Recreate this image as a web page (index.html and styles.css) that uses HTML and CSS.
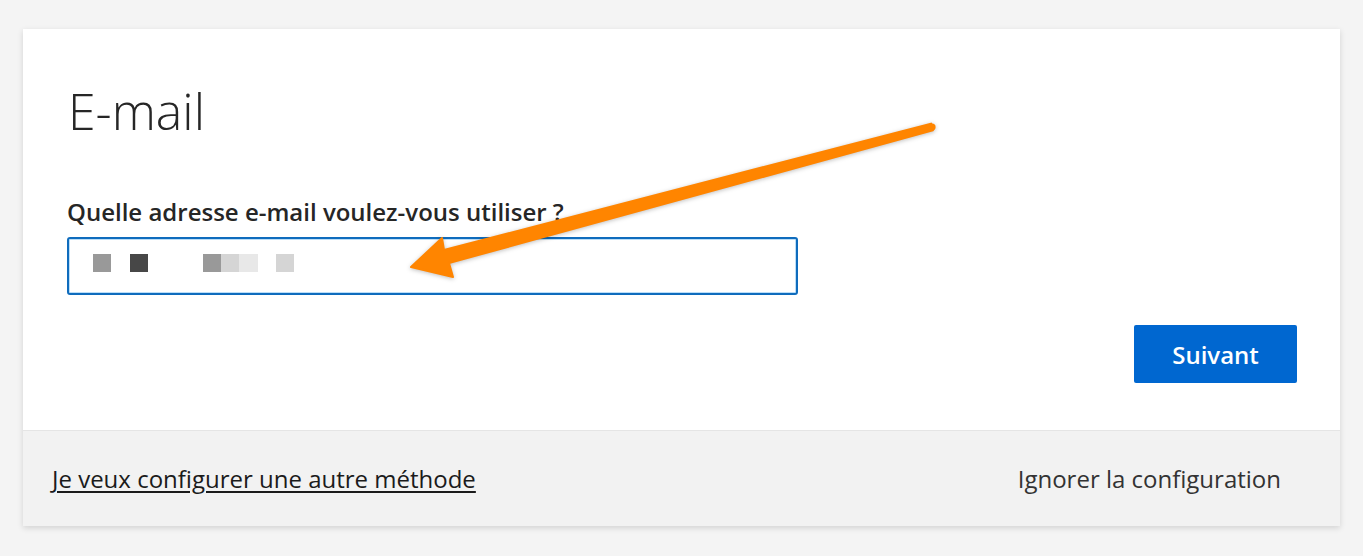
FILE: index.html
```html
<!DOCTYPE html>
<html lang="fr">
<head>
    <meta charset="UTF-8">
    <meta name="viewport" content="width=device-width, initial-scale=1.0">
    <title>E-mail</title>
    <link rel="stylesheet" href="styles.css">
</head>
<body>
    <div class="card">
        <div class="card-body">
            <h1>E-mail</h1>
            <label class="field-label" for="email">Quelle adresse e-mail voulez-vous utiliser ?</label>
            <div class="email-box" id="email">
                <!-- adresse masquée (pixellisée) -->
                <span class="px c1"></span>
                <span class="px"></span>
                <span class="px c2"></span>
                <span class="px"></span>
                <span class="px"></span>
                <span class="px"></span>
                <span class="px c1"></span>
                <span class="px c3"></span>
                <span class="px c4"></span>
                <span class="px"></span>
                <span class="px c3"></span>
            </div>
            <div class="actions">
                <button type="button" class="btn-primary">Suivant</button>
            </div>
        </div>
        <div class="card-footer">
            <a href="#" class="link">Je veux configurer une autre méthode</a>
            <button type="button" class="btn-text">Ignorer la configuration</button>
        </div>
    </div>

    <svg class="arrow" width="1363" height="556" viewBox="0 0 1363 556">
        <path d="M931.1,123.6 L444,250 L442,238 L411,267 L453,277 L449,263 L932.9,130.4 Z"
              fill="#ff8500" stroke="#ff8500" stroke-width="2" stroke-linejoin="round"/>
        <circle cx="932" cy="127" r="3.6" fill="#ff8500"/>
    </svg>
</body>
</html>
```

FILE: styles.css
```css
body {
    margin: 0;
    padding: 29px 23px 30px;
    background: #f4f4f4;
    font-family: "Open Sans", "Noto Sans", sans-serif;
    color: #1b1b1b;
    position: relative;
}

.card {
    width: 1317px;
    background: #fff;
    box-shadow: 0 2px 6px rgba(0, 0, 0, 0.14);
}

.card-body {
    padding: 48px 43px 47px 44px;
}

h1 {
    margin: 0 0 0 1px;
    font-size: 50px;
    font-weight: 300;
    line-height: 68px;
    color: #262626;
}

.field-label {
    display: block;
    margin-top: 51px;
    font-size: 24px;
    font-weight: 600;
    line-height: 32px;
    color: #262626;
}

.email-box {
    margin-top: 9px;
    width: 731px;
    height: 58px;
    border: 2px solid #0f6cbd;
    border-radius: 3px;
    box-shadow: inset 0 0 0 1px rgba(60, 160, 235, 0.35);
    display: flex;
    align-items: center;
    padding-left: 24px;
    box-sizing: border-box;
}

.px {
    width: 18.3px;
    height: 18px;
    margin-bottom: 6px;
}
.px.c1 { background: #999; }
.px.c2 { background: #474747; }
.px.c3 { background: #d5d5d5; }
.px.c4 { background: #e8e8e8; }

.actions {
    display: flex;
    justify-content: flex-end;
    margin-top: 30px;
}

.btn-primary {
    width: 163px;
    height: 58px;
    background: #0067d0;
    color: #fff;
    border: none;
    border-radius: 2px;
    font-family: inherit;
    font-size: 24px;
    font-weight: 600;
    cursor: pointer;
}

.card-footer {
    background: #f2f2f2;
    border-top: 1px solid #e5e5e5;
    height: 95px;
    display: flex;
    align-items: center;
    justify-content: space-between;
    padding: 0 59px 0 29px;
}

.link {
    color: #1b1b1b;
    font-size: 24px;
    text-decoration: underline;
    text-underline-offset: 3px;
}

.btn-text {
    background: none;
    border: none;
    padding: 0;
    font-family: inherit;
    font-size: 24px;
    color: #333;
    cursor: pointer;
}

.arrow {
    position: absolute;
    left: 0;
    top: 0;
    pointer-events: none;
    filter: drop-shadow(0 1px 2px rgba(0, 0, 0, 0.25));
}
```
